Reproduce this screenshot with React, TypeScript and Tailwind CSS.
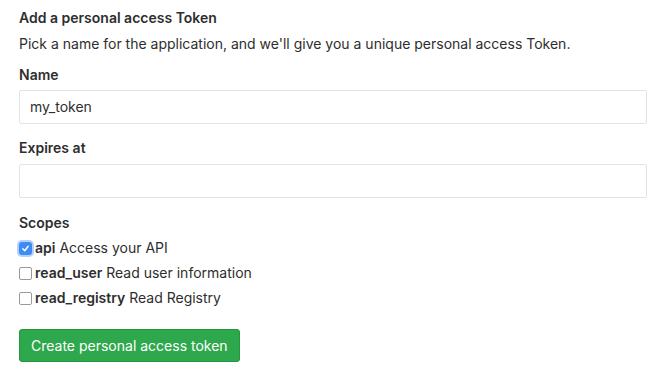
import React from "react";

function Check({ checked }: { checked?: boolean }) {
  if (checked) {
    return (
      <span className="flex h-[13px] w-[13px] items-center justify-center rounded-[3px] bg-[#3d8cf5] shadow-[0_0_0_2px_rgba(90,150,245,0.45)]">
        <svg width="9" height="9" viewBox="0 0 10 10">
          <path d="M2 5.3 L4.2 7.5 L8 2.5" stroke="white" strokeWidth="1.6" fill="none" strokeLinecap="round" strokeLinejoin="round" />
        </svg>
      </span>
    );
  }
  return <span className="h-[13px] w-[13px] rounded-[2px] border border-[#9a9a9a] bg-white" />;
}

export default function App() {
  const scopes = [
    { name: "api", desc: "Access your API", checked: true },
    { name: "read_user", desc: "Read user information" },
    { name: "read_registry", desc: "Read Registry" },
  ];
  return (
    <div className="h-[384px] w-[667px] bg-white text-[#2e2e2e]" style={{ fontFamily: 'Inter, "Liberation Sans", Arial, sans-serif' }}>
      <div className="flex w-[647px] flex-col pl-[19px] pt-[8px] text-[14px] leading-5">
        <h4 className="font-semibold">Add a personal access Token</h4>
        <p className="mt-[6px]">Pick a name for the application, and we'll give you a unique personal access Token.</p>
        <label className="mt-[11px] font-semibold">Name</label>
        <div className="mt-[5px] flex h-[34px] items-center rounded-[2px] border border-[#e3e3e3] bg-white px-[10px]">my_token</div>
        <label className="mt-[14px] font-semibold">Expires at</label>
        <div className="mt-[6px] h-[34px] rounded-[2px] border border-[#e3e3e3] bg-white" />
        <label className="mt-[15px] font-semibold">Scopes</label>
        <div className="mt-[5px] flex flex-col">
          {scopes.map((s) => (
            <div key={s.name} className="flex h-[25px] items-center gap-[3px] pb-[5px]">
              <Check checked={s.checked} />
              <span>
                <span className="font-semibold">{s.name}</span> {s.desc}
              </span>
            </div>
          ))}
        </div>
        <div className="mt-[16px]">
          <button className="flex h-[33px] items-center rounded-[3px] border border-[#26933f] bg-[#2ea84c] px-[11px] text-white">
            Create personal access token
          </button>
        </div>
      </div>
    </div>
  );
}
